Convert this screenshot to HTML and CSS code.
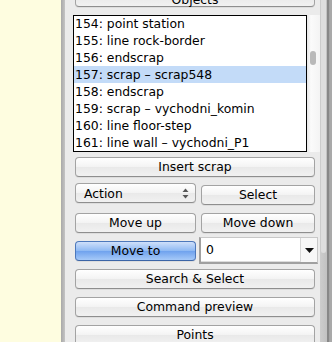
FILE: index.html
```html
<!DOCTYPE html>
<html lang="en">
<head>
  <meta charset="UTF-8">
  <title>Objects</title>
  <link rel="stylesheet" href="styles.css">
</head>
<body>

  <div class="window">
    <div class="canvas"></div>
    <div class="sash"></div>

    <div class="panel">
      <button class="btn objects">Objects</button>

      <div class="listframe">
        <ul class="objlist">
          <li>154: point station</li>
          <li>155: line rock-border</li>
          <li>156: endscrap</li>
          <li class="sel">157: scrap – scrap548</li>
          <li>158: endscrap</li>
          <li>159: scrap – vychodni_komin</li>
          <li>160: line floor-step</li>
          <li>161: line wall – vychodni_P1</li>
        </ul>
        <div class="vscroll"><div class="vthumb"></div></div>
      </div>

      <button class="btn insert">Insert scrap</button>

      <div class="row row-action">
        <div class="popup">
          <span>Action</span>
          <svg width="7" height="11" viewBox="0 0 7 11">
            <path d="M3.5 0.5 L6.5 4 L0.5 4 Z" fill="#555"/>
            <path d="M3.5 10.5 L6.5 7 L0.5 7 Z" fill="#555"/>
          </svg>
        </div>
        <button class="btn select">Select</button>
      </div>

      <div class="row row-move">
        <button class="btn left">Move up</button>
        <button class="btn">Move down</button>
      </div>

      <div class="row row-moveto">
        <button class="btn blue left">Move to</button>
        <div class="combo">
          <span class="field">0</span>
          <span class="drop">
            <svg width="9" height="5" viewBox="0 0 9 5"><path d="M0 0 L9 0 L4.5 5 Z" fill="#111"/></svg>
          </span>
        </div>
      </div>

      <button class="btn search">Search &amp; Select</button>
      <button class="btn command">Command preview</button>
      <button class="btn points">Points</button>
    </div>

    <div class="outer-scroll"><div class="othumb"></div></div>
  </div>

</body>
</html>
```

FILE: styles.css
```css
body {
  margin: 0;
  font-family: "DejaVu Sans", Verdana, sans-serif;
  font-size: 12.4px;
  color: #000;
}

.window {
  display: flex;
  width: 332px;
  height: 342px;
  overflow: hidden;
}

.canvas {
  width: 61px;
  background-color: #fefde0;
}

.sash {
  width: 4px;
  background: linear-gradient(to right, #a9a9a9, #c4c4c4);
}

.panel {
  width: 255px;
  box-sizing: border-box;
  padding: 0 5px 0 10px;
  background-color: #ebebeb;
  display: flex;
  flex-direction: column;
}

.panel > * {
  flex-shrink: 0;
}

.btn {
  height: 20px;
  box-sizing: border-box;
  padding: 0;
  font: inherit;
  color: #000;
  border: 1px solid #a3a3a3;
  border-bottom-color: #8e8e8e;
  border-radius: 4px;
  background: linear-gradient(#ffffff, #f3f3f3 50%, #e9e9e9 51%, #f1f1f1);
  box-shadow: 0 1px 0 rgba(0, 0, 0, 0.06);
  line-height: 16px;
  text-align: center;
}

.objects {
  margin-top: -13px;
  line-height: 14px;
  padding-top: 5px;
}

.listframe {
  margin: 8px -5px 0 -2px;
  height: 137px;
  display: flex;
}

.objlist {
  list-style: none;
  margin: 0;
  padding: 0;
  width: 234px;
  box-sizing: border-box;
  border: 1px solid #000;
  background: #fff;
  overflow: hidden;
}

.objlist li {
  height: 17px;
  line-height: 17px;
  padding-left: 1px;
  white-space: nowrap;
}

.objlist li:first-child {
  height: 16px;
  line-height: 15px;
}

.objlist .sel {
  background-color: #c3dbf8;
}

.vscroll {
  width: 13px;
  background: linear-gradient(to right, #e6e6e6, #fbfbfb 30%, #f4f4f4);
  position: relative;
}

.vthumb {
  position: absolute;
  left: 3px;
  top: 36px;
  width: 6px;
  height: 14px;
  border-radius: 3px;
  background: #b9b9b9;
}

.insert {
  margin-top: 5px;
}

.row {
  display: flex;
  gap: 5px;
}

.row .left,
.popup {
  width: 121px;
  flex: none;
}

.row .btn:last-child {
  flex: 1;
}

.row-action {
  margin-top: 6px;
  height: 22px;
}

.popup {
  height: 20px;
  box-sizing: border-box;
  border: 1px solid #a3a3a3;
  border-bottom-color: #8e8e8e;
  border-radius: 4px;
  background: linear-gradient(#ffffff, #f3f3f3 50%, #e9e9e9 51%, #f1f1f1);
  box-shadow: 0 1px 0 rgba(0, 0, 0, 0.06);
  display: flex;
  align-items: center;
  justify-content: space-between;
  padding: 0 6px 0 8px;
}

.row-action .select {
  align-self: flex-end;
}

.row-move {
  margin-top: 8px;
}

.row-moveto {
  margin-top: 4px;
  height: 27px;
  gap: 3px;
}

.blue {
  margin-top: 4px;
  border-color: #4d78bb;
  border-bottom-color: #3c65a6;
  background: linear-gradient(#cfe0fa, #8db8f3 50%, #6fa2ee 51%, #a6c9f8);
}

.combo {
  flex: 1;
  margin-right: -3px;
  display: flex;
  box-sizing: border-box;
  border: 1px solid #c8c8c8;
  border-left: 2px solid #a0a0a0;
  border-bottom: 2px solid #a0a0a0;
  background: #fff;
}

.field {
  flex: 1;
  padding: 4px 0 0 5px;
  border-right: 1px solid #d6d6d6;
  border-bottom: 1px solid #dcdcdc;
}

.drop {
  width: 16px;
  display: flex;
  align-items: center;
  justify-content: center;
  background: #f7f7f7;
}

.search {
  margin-top: 5px;
}

.command,
.points {
  margin-top: 8px;
}

.outer-scroll {
  width: 12px;
  position: relative;
  background: linear-gradient(to right, #cdcdcd, #c2c2c2 55%, #888 60%, #888 75%, #a9a9a9 80%);
}

.othumb {
  position: absolute;
  left: 1px;
  top: -6px;
  width: 5px;
  height: 259px;
  border-radius: 3px;
  background: #dedede;
}
```
